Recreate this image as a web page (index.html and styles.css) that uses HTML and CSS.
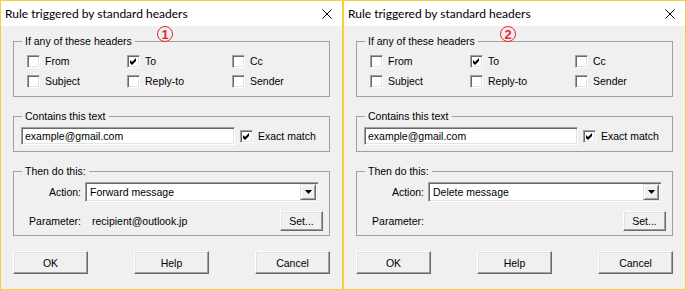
FILE: index.html
```html
<!DOCTYPE html>
<html lang="en">
<head>
    <meta charset="UTF-8">
    <title>Rule triggered by standard headers</title>
    <link rel="stylesheet" href="styles.css">
</head>
<body>
    <div class="dialog">
        <div class="titlebar">
            <span class="title">Rule triggered by standard headers</span>
            <svg class="close" width="10" height="10" viewBox="0 0 10 10"><path d="M0.5 0.5L9.5 9.5M9.5 0.5L0.5 9.5" stroke="#000" stroke-width="1"/></svg>
        </div>
        <div class="body">
            <span class="marker">1</span>
            <fieldset class="group">
                <legend>If any of these headers</legend>
                <div class="check-grid">
                    <label class="check"><span class="cb"></span>From</label>
                    <label class="check"><span class="cb"><svg width="7" height="7" viewBox="0 0 7 7"><path d="M0 2L2 4L6 0V3L2 7L0 5Z" fill="#000"/></svg></span>To</label>
                    <label class="check"><span class="cb"></span>Cc</label>
                    <label class="check"><span class="cb"></span>Subject</label>
                    <label class="check"><span class="cb"></span>Reply-to</label>
                    <label class="check"><span class="cb"></span>Sender</label>
                </div>
            </fieldset>
            <fieldset class="group">
                <legend>Contains this text</legend>
                <div class="text-row">
                    <div class="field">example@gmail.com</div>
                    <label class="check"><span class="cb"><svg width="7" height="7" viewBox="0 0 7 7"><path d="M0 2L2 4L6 0V3L2 7L0 5Z" fill="#000"/></svg></span>Exact match</label>
                </div>
            </fieldset>
            <fieldset class="group">
                <legend>Then do this:</legend>
                <div class="action-rows">
                    <div class="form-row">
                        <span class="row-label">Action:</span>
                        <div class="combo"><span class="combo-text">Forward message</span><span class="drop"><svg width="7" height="4" viewBox="0 0 7 4"><path d="M0 0H7L3.5 4Z" fill="#000"/></svg></span></div>
                    </div>
                    <div class="form-row">
                        <span class="row-label">Parameter:</span>
                        <span class="param-value">recipient@outlook.jp</span>
                        <button class="btn set">Set...</button>
                    </div>
                </div>
            </fieldset>
            <div class="buttons">
                <button class="btn">OK</button>
                <button class="btn">Help</button>
                <button class="btn">Cancel</button>
            </div>
        </div>
    </div>

    <div class="dialog">
        <div class="titlebar">
            <span class="title">Rule triggered by standard headers</span>
            <svg class="close" width="10" height="10" viewBox="0 0 10 10"><path d="M0.5 0.5L9.5 9.5M9.5 0.5L0.5 9.5" stroke="#000" stroke-width="1"/></svg>
        </div>
        <div class="body">
            <span class="marker">2</span>
            <fieldset class="group">
                <legend>If any of these headers</legend>
                <div class="check-grid">
                    <label class="check"><span class="cb"></span>From</label>
                    <label class="check"><span class="cb"><svg width="7" height="7" viewBox="0 0 7 7"><path d="M0 2L2 4L6 0V3L2 7L0 5Z" fill="#000"/></svg></span>To</label>
                    <label class="check"><span class="cb"></span>Cc</label>
                    <label class="check"><span class="cb"></span>Subject</label>
                    <label class="check"><span class="cb"></span>Reply-to</label>
                    <label class="check"><span class="cb"></span>Sender</label>
                </div>
            </fieldset>
            <fieldset class="group">
                <legend>Contains this text</legend>
                <div class="text-row">
                    <div class="field">example@gmail.com</div>
                    <label class="check"><span class="cb"><svg width="7" height="7" viewBox="0 0 7 7"><path d="M0 2L2 4L6 0V3L2 7L0 5Z" fill="#000"/></svg></span>Exact match</label>
                </div>
            </fieldset>
            <fieldset class="group">
                <legend>Then do this:</legend>
                <div class="action-rows">
                    <div class="form-row">
                        <span class="row-label">Action:</span>
                        <div class="combo"><span class="combo-text">Delete message</span><span class="drop"><svg width="7" height="4" viewBox="0 0 7 4"><path d="M0 0H7L3.5 4Z" fill="#000"/></svg></span></div>
                    </div>
                    <div class="form-row">
                        <span class="row-label">Parameter:</span>
                        <span class="param-value"></span>
                        <button class="btn set">Set...</button>
                    </div>
                </div>
            </fieldset>
            <div class="buttons">
                <button class="btn">OK</button>
                <button class="btn">Help</button>
                <button class="btn">Cancel</button>
            </div>
        </div>
    </div>
</body>
</html>
```

FILE: styles.css
```css
body {
    margin: 0;
    padding: 0;
    display: flex;
    background: #f0f0f0;
    font-family: 'Liberation Sans', Arial, sans-serif;
    font-size: 10.5px;
    color: #000;
}
.dialog {
    position: relative;
    width: 343px;
    height: 290px;
    box-sizing: border-box;
    border: 1px solid #f6d03a;
    background: #f0f0f0;
    display: flex;
    flex-direction: column;
}
.titlebar {
    height: 25px;
    background: #fff;
    display: flex;
    align-items: center;
    justify-content: space-between;
    padding: 0 10px 0 4px;
}
.title {
    font-family: Lato, sans-serif;
    font-size: 12px;
    color: #000;
}
.close {
    display: block;
}
.body {
    flex: 1;
    display: flex;
    flex-direction: column;
}
/* circled step number over the first group border */
.marker {
    position: absolute;
    left: 156px;
    top: 25px;
    width: 16px;
    height: 16px;
    box-sizing: border-box;
    border: 1.2px solid #e8262c;
    border-radius: 50%;
    display: flex;
    align-items: center;
    justify-content: center;
    font-family: 'Liberation Sans', Arial, sans-serif;
    font-size: 13px;
    font-weight: bold;
    line-height: 1;
    color: #e8262c;
}
.group {
    margin: 13px 12px 0;
    padding: 0;
    border: 1px solid #a0a0a0;
    min-width: 0;
}
.group:first-of-type {
    margin-top: 9px;
}
legend {
    margin-left: 8px;
    padding: 0 3px;
    line-height: 13px;
}
.check-grid {
    display: grid;
    grid-template-columns: 100px 105px auto;
    grid-auto-rows: 20px;
    padding: 3px 0 5px 13px;
}
.check {
    display: flex;
    align-items: center;
    gap: 5px;
}
.cb {
    width: 13px;
    height: 13px;
    box-sizing: border-box;
    background: #fff;
    border: 1px solid;
    border-color: #a0a0a0 #fff #fff #a0a0a0;
    box-shadow: inset 1px 1px 0 #696969, inset -1px -1px 0 #e3e3e3;
    display: flex;
    align-items: center;
    justify-content: center;
}
.cb svg {
    display: block;
}
.text-row {
    display: flex;
    align-items: center;
    gap: 5px;
    padding: 4px 0 6px 7px;
}
.field {
    width: 214px;
    height: 18px;
    box-sizing: border-box;
    background: #fff;
    border: 1px solid;
    border-color: #a0a0a0 #fff #fff #a0a0a0;
    box-shadow: inset 1px 1px 0 #696969, inset -1px -1px 0 #e3e3e3;
    padding: 0 3px;
    line-height: 16px;
}
.action-rows {
    display: flex;
    flex-direction: column;
    gap: 9px;
    padding: 4px 6px 4px 0;
}
.form-row {
    display: flex;
    align-items: center;
}
.row-label {
    width: 67px;
    text-align: right;
    margin-right: 4px;
}
.combo {
    width: 234px;
    height: 20px;
    box-sizing: border-box;
    background: #fff;
    border: 1px solid;
    border-color: #a0a0a0 #fff #fff #a0a0a0;
    box-shadow: inset 1px 1px 0 #696969, inset -1px -1px 0 #e3e3e3;
    display: flex;
    align-items: center;
    padding: 2px;
}
.combo-text {
    flex: 1;
    padding-left: 2px;
}
.drop {
    width: 16px;
    height: 16px;
    box-sizing: border-box;
    background: #f0f0f0;
    border: 1px solid;
    border-color: #e3e3e3 #696969 #696969 #e3e3e3;
    box-shadow: inset 1px 1px 0 #fff, inset -1px -1px 0 #a0a0a0;
    display: flex;
    align-items: center;
    justify-content: center;
}
.param-value {
    flex: 1;
    margin-left: 7px;
}
.btn {
    width: 75px;
    height: 23px;
    box-sizing: border-box;
    font-family: 'Liberation Sans', Arial, sans-serif;
    font-size: 10.5px;
    color: #000;
    background: #f0f0f0;
    border: 1px solid;
    border-color: #fff #696969 #696969 #fff;
    box-shadow: inset -1px -1px 0 #a0a0a0, inset 1px 1px 0 #e3e3e3;
    padding: 0;
}
.btn.set {
    width: 43px;
    height: 20px;
}
.buttons {
    display: flex;
    justify-content: space-between;
    margin: 15px 12px 0;
}
```
